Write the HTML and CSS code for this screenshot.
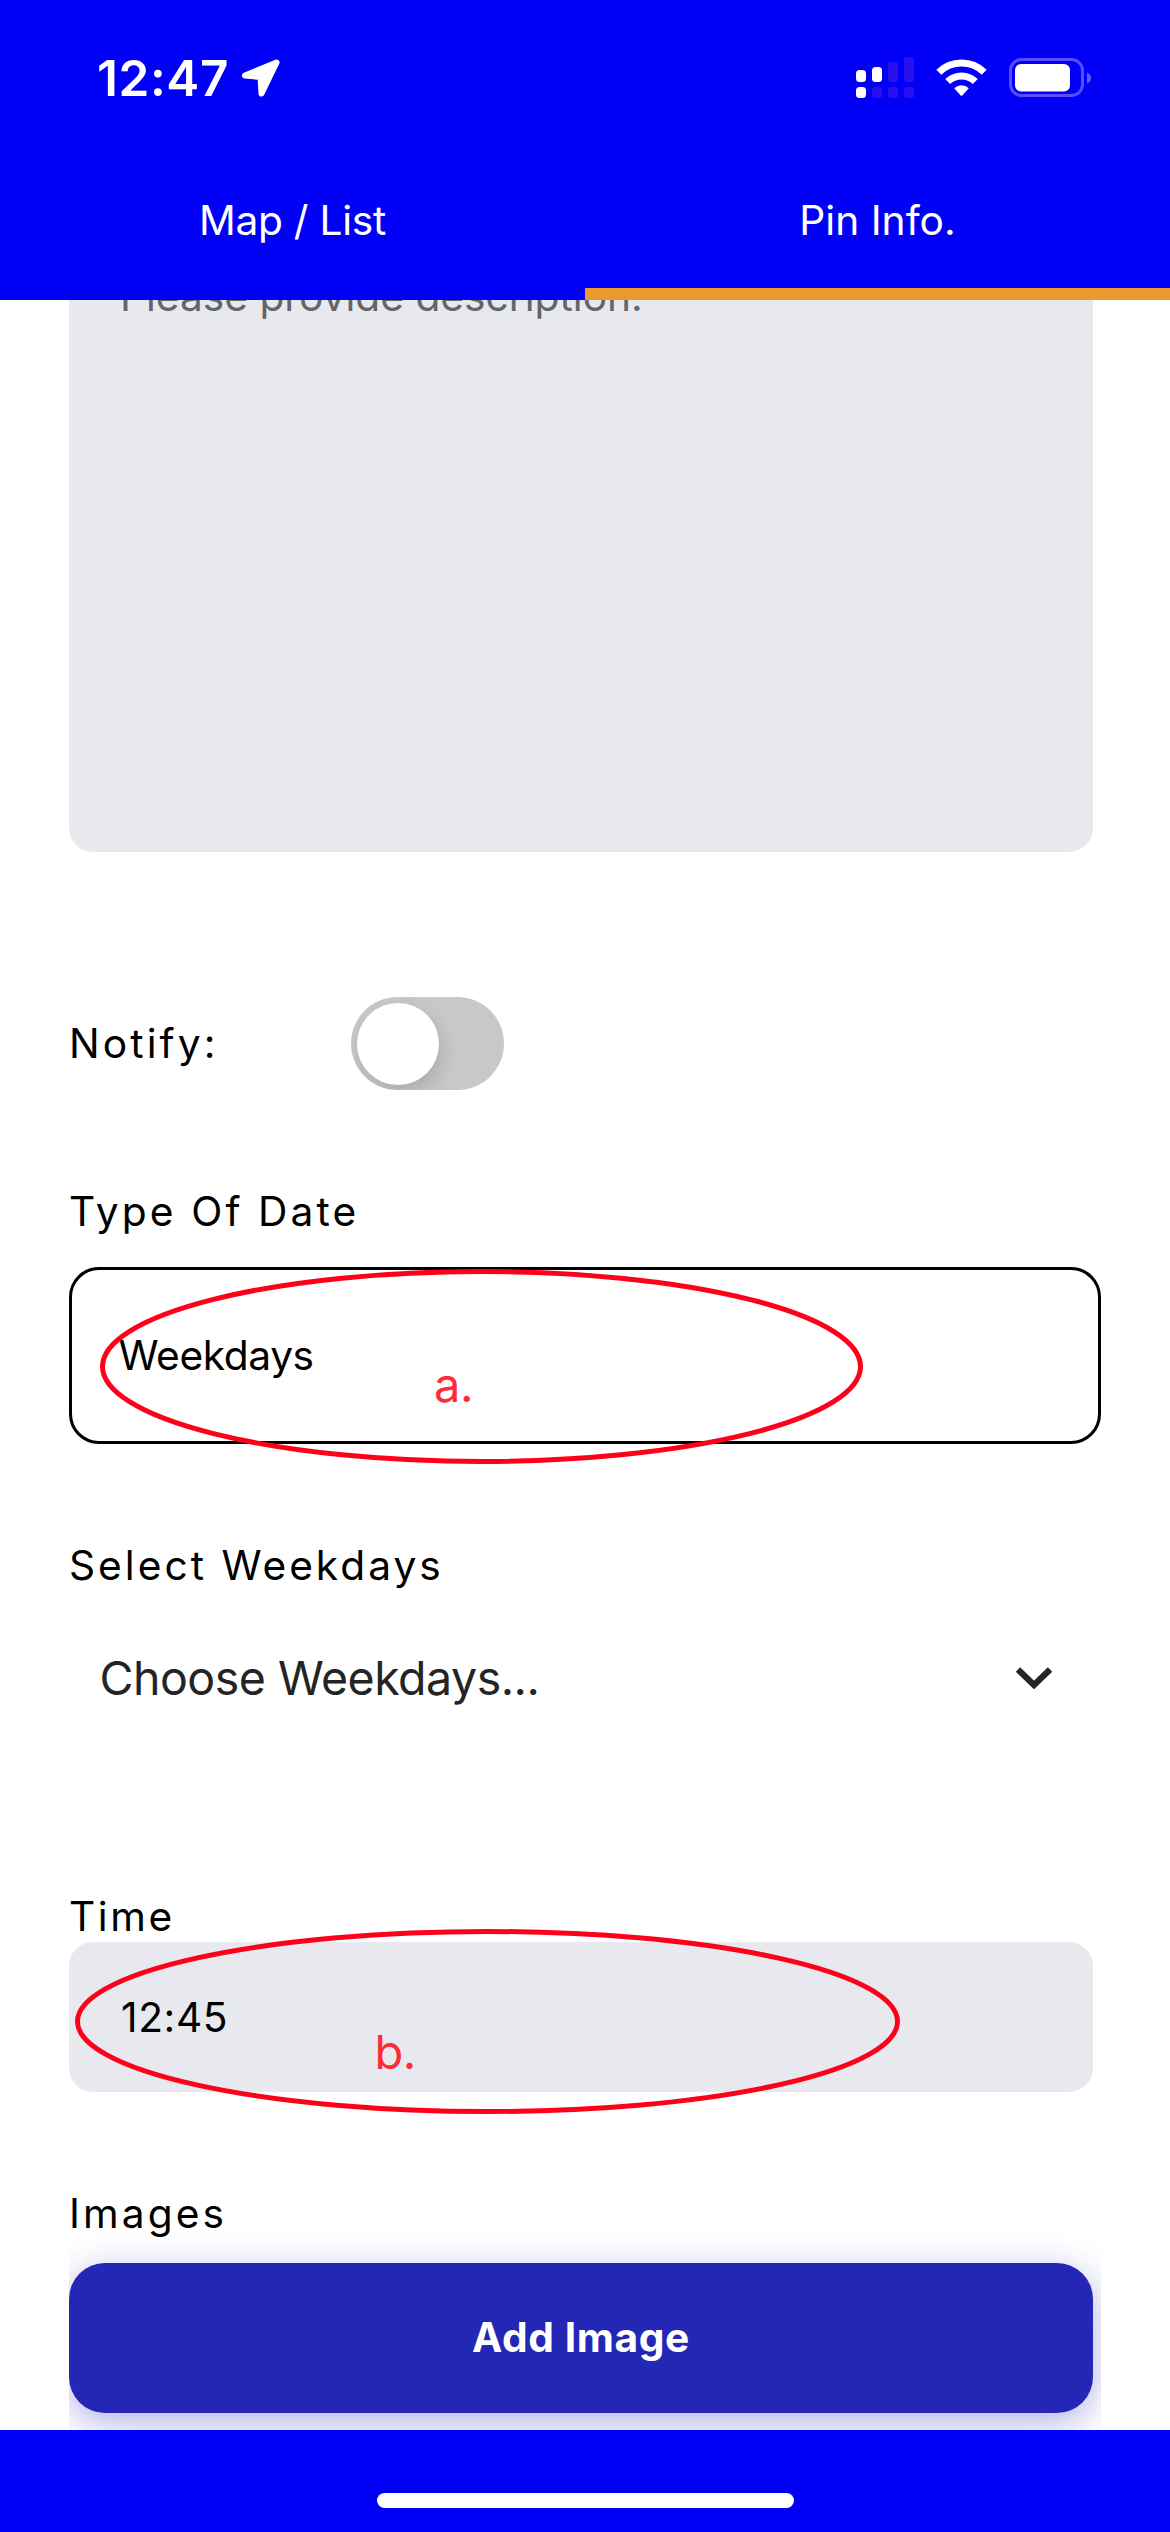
FILE: index.html
```html
<!DOCTYPE html>
<html lang="en">
<head>
<meta charset="utf-8">
<title>Pin Info.</title>
<link rel="stylesheet" href="styles.css">
</head>
<body>
<div class="screen">
  <header class="header">
    <div class="status">
      <div class="status-time">
        <span class="clock">12:47</span>
        <svg class="location" width="42" height="42" viewBox="0 0 42 42"><path d="M36.500 4.500L5 17.500L20.500 19L21.500 35.500Z" fill="#fff" stroke="#fff" stroke-width="6" stroke-linejoin="round"/></svg>
      </div>
      <div class="status-icons">
        <svg class="signal" width="58" height="41" viewBox="0 0 58 41">
          <g fill="#fff"><rect x="0" y="13" width="10" height="12" rx="3.500"/><rect x="16" y="10" width="10" height="15" rx="3.500"/><rect x="0" y="30" width="10" height="11" rx="3.500"/></g>
          <g fill="#2a10ee"><rect x="32" y="5" width="10" height="20" rx="3"/><rect x="48" y="0" width="10" height="25" rx="3"/><rect x="16" y="30" width="10" height="11" rx="3.500"/><rect x="32" y="30" width="10" height="11" rx="3.500"/><rect x="48" y="30" width="10" height="11" rx="3.500"/></g>
        </svg>
        <svg class="wifi" width="51" height="38" viewBox="0 0 51 38">
          <g fill="none" stroke="#fff" stroke-width="7"><path d="M2.800 13.300A32.500 32.500 0 0 1 48.200 13.300"/><path d="M11.700 22.500A19.800 19.800 0 0 1 39.300 22.500"/></g>
          <path d="M18.200 29.300A10.500 10.500 0 0 1 32.800 29.300L26.300 36.400Q25.500 37.200 24.700 36.400Z" fill="#fff"/>
        </svg>
        <svg class="battery" width="83" height="40" viewBox="0 0 83 40">
          <rect x="1.500" y="1.500" width="72" height="36" rx="11" fill="none" stroke="#5a4cfb" stroke-width="3"/>
          <rect x="6" y="6" width="55" height="27.500" rx="6" fill="#fff"/>
          <path d="M78 14.500Q82 16 82 20T78 25.500Z" fill="#6659fb"/>
        </svg>
      </div>
    </div>
    <nav class="tabs">
      <a class="tab tab-map">Map / List</a>
      <a class="tab tab-active">Pin Info.</a>
    </nav>
  </header>

  <main class="form">
    <div class="description">Please provide description.</div>

    <div class="notify">
      <span class="label notify-label">Notify:</span>
      <span class="toggle"><span class="thumb"></span></span>
    </div>

    <div class="label type-label">Type Of Date</div>
    <div class="field type-field">
      <div class="select">Weekdays</div>
      <svg class="ring ring-a" width="763" height="195" viewBox="0 0 763 195"><ellipse cx="381.500" cy="97.500" rx="379" ry="95"/></svg>
      <span class="note note-a">a.</span>
    </div>

    <div class="label weekdays-label">Select Weekdays</div>
    <div class="dropdown">
      <span>Choose Weekdays...</span>
      <svg width="36" height="22" viewBox="0 0 36 22"><path d="M2 2.500L18 18L34 2.500" fill="none" stroke="#242424" stroke-width="6.200"/></svg>
    </div>

    <div class="label time-label">Time</div>
    <div class="field">
      <div class="input">12:45</div>
      <svg class="ring ring-b" width="825" height="185" viewBox="0 0 825 185"><ellipse cx="412.500" cy="92.500" rx="410" ry="90"/></svg>
      <span class="note note-b">b.</span>
    </div>

    <div class="label images-label">Images</div>
    <div class="add-image">Add Image</div>
  </main>

  <footer class="footer"><div class="home"></div></footer>
</div>
</body>
</html>
```

FILE: styles.css
```css
* { box-sizing: border-box; }

body {
  margin: 0;
  background: #fff;
  color: #000;
  font: 400 40.7px/48px Inter, "Liberation Sans", sans-serif;
}

svg { display: block; flex: none; }

.screen {
  width: 1170px;
  height: 2532px;
  display: flex;
  flex-direction: column;
  overflow: hidden;
}

/* Header */
.header {
  flex: none;
  height: 300px;
  background: #0000f7;
  color: #fff;
}

.status {
  height: 156px;
  padding: 0 78px 0 97px;
  display: flex;
  align-items: center;
  justify-content: space-between;
}

.status-time { display: flex; align-items: center; gap: 11px; }
.clock { font-size: 49.5px; font-weight: 600; letter-spacing: 0.6px; }
.location { margin-top: 2px; }
.status-icons { display: flex; align-items: center; gap: 22px; }
.signal { margin-top: -1px; }

.tabs { display: flex; height: 144px; }
.tab {
  flex: 1;
  text-align: center;
  line-height: 130px;
  border-bottom: 12px solid transparent;
}
.tab-map { letter-spacing: -0.28px; }
.tab-active { border-color: #eb992f; }

/* Form */
.form {
  flex: none;
  height: 2130px;
  width: 1032px;
  margin-left: 69px;
  overflow: hidden;
  display: flex;
  flex-direction: column;
}

.form > * { flex: none; }

.label { letter-spacing: 3.1px; }

.description {
  width: 1024px;
  height: 612px;
  margin-top: -60px;
  padding: 33px 51px;
  border-radius: 24px;
  background: #e8e9ee;
  color: #646569;
}

.notify {
  display: flex;
  align-items: center;
  height: 93px;
  margin-top: 145px;
}
.notify-label { width: 282px; }

.toggle {
  width: 153px;
  height: 93px;
  padding: 5.5px;
  border-radius: 47px;
  background: #c8c8ca;
  overflow: hidden;
}
.thumb {
  display: block;
  width: 82px;
  height: 82px;
  border-radius: 50%;
  background: #fff;
  box-shadow: 3px 8px 18px rgba(0, 0, 0, 0.14);
}

.field { position: relative; }

.type-label { margin-top: 98px; }
.type-field { margin-top: 31px; }
.select {
  height: 177px;
  padding-left: 46.5px;
  border: 3px solid #000;
  border-radius: 30px;
  line-height: 171px;
  letter-spacing: -0.4px;
}

.weekdays-label { margin-top: 98px; letter-spacing: 3px; }
.dropdown {
  display: flex;
  align-items: center;
  justify-content: space-between;
  height: 100px;
  margin-top: 38px;
  padding: 0 49px 0 30.5px;
  color: #242424;
  font-size: 46.5px;
  letter-spacing: -0.5px;
}

.time-label { margin-top: 165px; letter-spacing: 2.6px; }
.input {
  width: 1024px;
  height: 150px;
  margin-top: 1px;
  padding-left: 52px;
  border-radius: 24px;
  background: #e8e9ee;
  line-height: 151px;
  letter-spacing: 0.6px;
}

.images-label { margin-top: 98px; }
.add-image {
  width: 1024px;
  height: 150px;
  margin-top: 25px;
  border-radius: 36px;
  background: #2427b6;
  box-shadow: 0 9px 36px rgba(36, 39, 182, 0.36);
  color: #fff;
  font-weight: 700;
  line-height: 149px;
  letter-spacing: 0.6px;
  text-align: center;
}

/* Review marks over the fields */
.ring {
  position: absolute;
  fill: none;
  stroke: #ff001a;
  stroke-width: 5px;
}
.ring-a { left: 31px; top: 2px; }
.ring-b { left: 6px; top: -12px; }

.note {
  position: absolute;
  color: #ff2b38;
  font-size: 47px;
  line-height: 60px;
  letter-spacing: -0.5px;
}
.note-a { left: 365px; top: 88px; }
.note-b { left: 305.5px; top: 81px; }

/* Footer */
.footer {
  flex: none;
  height: 102px;
  padding-top: 63px;
  background: #0000f7;
}
.home {
  width: 417px;
  height: 15px;
  margin: 0 auto;
  border-radius: 8px;
  background: #fff;
}
```
